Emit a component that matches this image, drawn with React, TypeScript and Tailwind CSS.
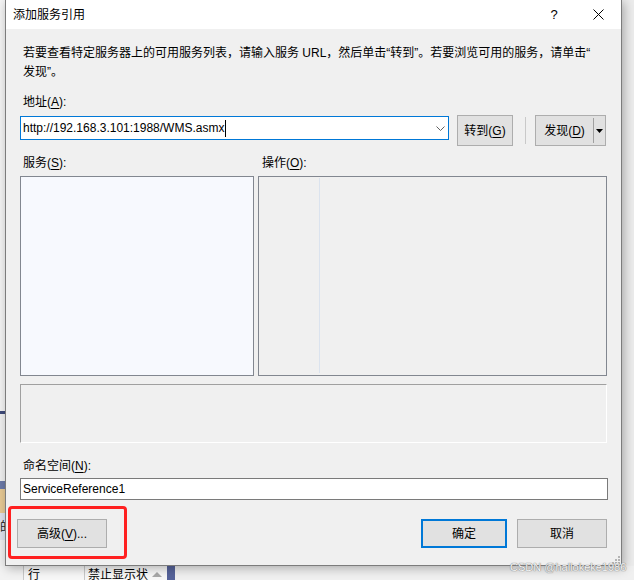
import React from "react";

function Mn({ c }: { c: string }) {
  return <span className="underline underline-offset-[2px]">{c}</span>;
}

function Btn({
  children,
  w,
  primary,
}: {
  children: React.ReactNode;
  w: string;
  primary?: boolean;
}) {
  return (
    <div
      className={
        primary
          ? "flex h-[29px] w-[86px] items-center justify-center border-2 border-[#0078d7] bg-[#e1e1e1]"
          : w === "90"
          ? "flex h-[29px] w-[90px] items-center justify-center border border-[#adadad] bg-[#e1e1e1]"
          : "flex h-[31px] w-[56px] items-center justify-center border border-[#adadad] bg-[#e1e1e1]"
      }
    >
      {children}
    </div>
  );
}

function LeftStrip() {
  return (
    <div className="flex w-[5px] flex-col overflow-hidden">
      <div className="h-[411px] bg-[#f4f4f4]" />
      <div className="h-[3px] bg-[#3f4b7a]" />
      <div className="h-[67px] bg-[#f0f0f0]" />
      <div className="h-[8px] bg-[#6c7aa8]" />
      <div className="h-[24px] bg-[#e7c994]" />
      <div className="flex h-[27px] items-center justify-end overflow-hidden bg-[#dfe2ee]">
        <span className="shrink-0 -mr-[7px] text-[12px] leading-[14px] text-[#222]">的</span>
      </div>
      <div className="flex-1 bg-[#f0f0f0]" />
    </div>
  );
}

function BottomStrip() {
  return (
    <div className="flex h-[14px] overflow-hidden bg-[#f2f2f2] text-[12px] leading-[16px]">
      <div className="w-[23px]" />
      <div className="w-[61px] border-l border-[#c8c8c8] bg-[#f7f7f7] pl-[4px] pt-[1px]">行</div>
      <div className="flex w-[83px] border-l border-[#c8c8c8] bg-[#f7f7f7] pl-[3px] pt-[1px]">
        <span className="w-[62px] overflow-hidden whitespace-nowrap">禁止显示状</span>
        <svg width="10" height="10" viewBox="0 0 10 10" className="mt-[2px] ml-[2px]">
          <polygon points="0,8 10,8 5,3" fill="#a8a8a8" />
        </svg>
      </div>
      <div className="w-[8px] bg-[#56639a]" />
      <div className="flex-1 bg-[#f0f0f0]" />
    </div>
  );
}

export default function App() {
  return (
    <div className="relative h-[580px] w-[634px] overflow-hidden bg-[#f0f0f0] font-['Liberation_Sans','Noto_Sans_CJK_SC',sans-serif] text-[12px] text-black">
      <div className="flex h-[566px]">
        <LeftStrip />
        <div className="relative z-10 flex h-[566px] w-[617px] flex-col border-x border-b border-[#7c7c7c] bg-[#f0f0f0] shadow-[2px_2px_10px_rgba(0,0,0,0.3)]">
          {/* title bar */}
          <div className="flex h-[29px] shrink-0 items-center bg-white pl-[7px]">
            <span className="leading-[16px]">添加服务引用</span>
            <div className="ml-auto flex h-[29px] w-[46px] items-center justify-center pl-[4px] text-[13px]">?</div>
            <div className="flex h-[29px] w-[46px] items-center justify-center">
              <svg width="11" height="11" viewBox="0 0 11 11">
                <path d="M0.5 0.5 L10.5 10.5 M10.5 0.5 L0.5 10.5" stroke="#000" strokeWidth="1" fill="none" />
              </svg>
            </div>
          </div>

          {/* body */}
          <div className="flex flex-col pl-[14px] pr-[13px] pt-[15px]">
            <p className="whitespace-nowrap pl-[3px] leading-[19px]">
              若要查看特定服务器上的可用服务列表，请输入服务 URL，然后单击“转到”。若要浏览可用的服务，请单击“
              <br />
              发现”。
            </p>

            <div className="mt-[12px] pl-[3px] leading-[16px]">
              地址(<Mn c="A" />):
            </div>

            <div className="mt-[5px] flex h-[31px] items-start">
              <div className="mt-[1px] flex h-[24px] w-[429px] items-center border border-[#0078d7] bg-white pl-[2px]">
                <span className="whitespace-nowrap leading-[16px]">http://192.168.3.101:1988/WMS.asmx</span>
                <span className="ml-[1px] h-[17px] w-px bg-black" />
                <svg width="9" height="5" viewBox="0 0 9 5" className="ml-auto mr-[3px]">
                  <polyline points="0.5,0.5 4.5,4.5 8.5,0.5" stroke="#606060" strokeWidth="1" fill="none" />
                </svg>
              </div>
              <div className="ml-[8px]">
                <Btn w="56">
                  转到(<Mn c="G" />)
                </Btn>
              </div>
              <div className="ml-[12px] mt-[2px] h-[27px] w-px bg-[#c9c9c9]" />
              <div className="ml-[9px] flex h-[31px] w-[71px] border border-[#adadad] bg-[#e1e1e1]">
                <div className="flex w-[57px] items-center justify-center">
                  发现(<Mn c="D" />)
                </div>
                <div className="my-[2px] w-px bg-[#a0a0a0]" />
                <div className="flex flex-1 items-center justify-center">
                  <svg width="7" height="4" viewBox="0 0 7 4">
                    <polygon points="0,0 7,0 3.5,4" fill="#000" />
                  </svg>
                </div>
              </div>
            </div>

            <div className="mt-[9px] flex leading-[16px]">
              <div className="w-[238px] pl-[3px]">
                服务(<Mn c="S" />):
              </div>
              <div className="pl-[4px]">
                操作(<Mn c="O" />):
              </div>
            </div>

            <div className="mt-[5px] flex h-[200px] gap-[4px]">
              <div className="w-[234px] border border-[#828790] bg-[#f7f9fe]" />
              <div className="flex w-[349px] border border-[#828790] bg-[#f0f0f0]">
                <div className="mb-[2px] mt-[1px] w-[61px] border-r border-[#dbe3ee]" />
              </div>
            </div>

            <div className="mt-[8px] h-[59px] w-[587px] border-l border-t border-b border-r border-l-[#a0a0a0] border-t-[#a0a0a0] border-r-white border-b-white bg-[#f0f0f0]" />

            <div className="mt-[15px] pl-[3px] leading-[16px]">
              命名空间(<Mn c="N" />):
            </div>

            <div className="mt-[4px] flex h-[22px] items-center border border-[#7a7a7a] bg-white pl-[2px]">
              <span className="leading-[16px]">ServiceReference1</span>
            </div>

            <div className="-ml-[3px] mt-[19px] flex">
              <Btn w="90">
                高级(<Mn c="V" />)...
              </Btn>
              <div className="ml-auto flex gap-[10px] pr-[1px]">
                <Btn w="86" primary>
                  确定
                </Btn>
                <Btn w="90">取消</Btn>
              </div>
            </div>
          </div>

          {/* resize grip */}
          <svg width="9" height="9" viewBox="0 0 9 9" className="absolute bottom-[1px] right-[1px]">
            <rect x="7" y="1" width="2" height="2" fill="#b4b4b4" />
            <rect x="4" y="4" width="2" height="2" fill="#b4b4b4" />
            <rect x="7" y="4" width="2" height="2" fill="#b4b4b4" />
            <rect x="1" y="7" width="2" height="2" fill="#b4b4b4" />
            <rect x="4" y="7" width="2" height="2" fill="#b4b4b4" />
            <rect x="7" y="7" width="2" height="2" fill="#b4b4b4" />
          </svg>
        </div>
        <div className="w-[12px] bg-[#ececec]" />
      </div>
      <BottomStrip />

      {/* red annotation */}
      <div className="absolute left-[8px] top-[506px] z-20 h-[53px] w-[119px] rounded-[4px] border-[3px] border-[#ff2020]" />

      {/* watermark */}
      <div className="absolute left-[510px] top-[561px] z-20 whitespace-nowrap text-[11px] leading-[13px] text-[#f4f4f4] [text-shadow:0_0_1px_#7a7a7a,0_0_1px_#7a7a7a]">
        CSDN @hallokeke1986
      </div>
    </div>
  );
}
